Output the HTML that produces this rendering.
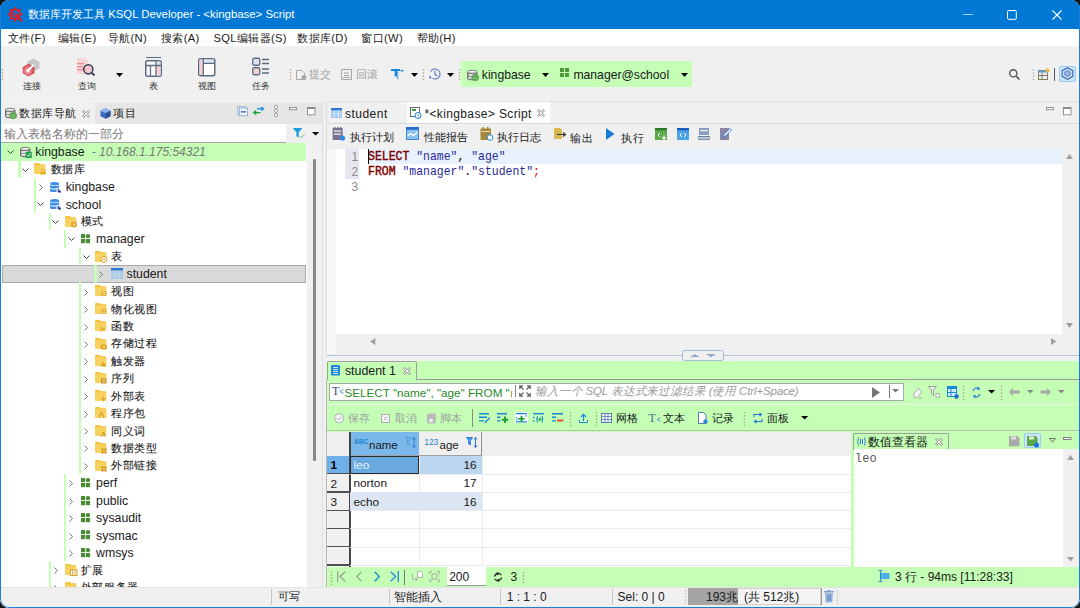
<!DOCTYPE html>
<html><head><meta charset="utf-8">
<style>
*{box-sizing:border-box;margin:0;padding:0}
html,body{width:1080px;height:608px;overflow:hidden;background:#161616}
body{font-family:"Liberation Sans",sans-serif;font-size:12px;color:#1a1a1a;position:relative}
.a{position:absolute}
.t{position:absolute;white-space:pre;line-height:1}
svg{position:absolute;overflow:visible}
#win{position:absolute;left:0;top:0;width:1080px;height:608px;border-radius:9px;overflow:hidden;background:#f0f0f0}
</style></head><body>
<div id="win">
<div class="a" style="left:0px;top:0px;width:1080px;height:28.7px;background:#0078d4;"></div>
<svg style="left:8px;top:7px;" width="16" height="16" viewBox="0 0 16 16"><polygon points="6.05,0.19 8.35,0.19 8.64,2.10 9.86,2.60 11.42,1.46 13.04,3.08 11.90,4.64 12.40,5.86 14.31,6.15 14.31,8.45 12.40,8.74 11.90,9.96 13.04,11.52 11.42,13.14 9.86,12.00 8.64,12.50 8.35,14.41 6.05,14.41 5.76,12.50 4.54,12.00 2.98,13.14 1.36,11.52 2.50,9.96 2.00,8.74 0.09,8.45 0.09,6.15 2.00,5.86 2.50,4.64 1.36,3.08 2.98,1.46 4.54,2.60 5.76,2.10" fill="#dc1e28"/><circle cx="7.2" cy="7.3" r="3.7" fill="#0078d4"/><path d="M8.4 8.5 L13.6 13.7" stroke="#dc1e28" stroke-width="2" stroke-linecap="round"/><path d="M5.9 4.9 A2.5 2.5 0 1 0 9.7 7.9" fill="none" stroke="#dc1e28" stroke-width="1.5"/><path d="M7.5 6.3 L10 8.8" stroke="#dc1e28" stroke-width="1.6"/></svg>
<div class="t" style="left:28px;top:9px;font-size:11.4px;color:#fff;">数据库开发工具 KSQL Developer - &lt;kingbase&gt; Script</div>
<div class="a" style="left:963px;top:13.6px;width:9.5px;height:1px;background:#a8d0f4;"></div>
<svg style="left:1007px;top:9.5px;" width="10" height="10" viewBox="0 0 10 10"><rect x="0.5" y="0.5" width="8.8" height="8.8" rx="1" fill="none" stroke="#fff" stroke-width="1"/></svg>
<svg style="left:1051.8px;top:9.6px;" width="10" height="10" viewBox="0 0 10 10"><path d="M0.5 0.5L9.5 9.5M9.5 0.5L0.5 9.5" stroke="#fff" stroke-width="1.1"/></svg>
<div class="a" style="left:0px;top:28.7px;width:1080px;height:17.5px;background:#fff;"></div>
<div class="t" style="left:7.8px;top:33px;font-size:11.2px;color:#1a1a1a;letter-spacing:0.35px">文件(F)</div>
<div class="t" style="left:57.8px;top:33px;font-size:11.2px;color:#1a1a1a;letter-spacing:0.35px">编辑(E)</div>
<div class="t" style="left:107.8px;top:33px;font-size:11.2px;color:#1a1a1a;letter-spacing:0.35px">导航(N)</div>
<div class="t" style="left:161px;top:33px;font-size:11.2px;color:#1a1a1a;letter-spacing:0.35px">搜索(A)</div>
<div class="t" style="left:213.5px;top:33px;font-size:11.2px;color:#1a1a1a;letter-spacing:0.35px">SQL编辑器(S)</div>
<div class="t" style="left:297.2px;top:33px;font-size:11.2px;color:#1a1a1a;letter-spacing:0.35px">数据库(D)</div>
<div class="t" style="left:361.3px;top:33px;font-size:11.2px;color:#1a1a1a;letter-spacing:0.35px">窗口(W)</div>
<div class="t" style="left:416.5px;top:33px;font-size:11.2px;color:#1a1a1a;letter-spacing:0.35px">帮助(H)</div>
<div class="a" style="left:0px;top:46px;width:1080px;height:55px;background:#f0f0f0;"></div>
<svg style="left:2px;top:69px;" width="1" height="12" viewBox="0 0 1 12"><rect x="-0.2" y="0.0" width="1.4" height="1.4" fill="#b9a98a"/><rect x="-0.2" y="3.2" width="1.4" height="1.4" fill="#b9a98a"/><rect x="-0.2" y="6.4" width="1.4" height="1.4" fill="#b9a98a"/><rect x="-0.2" y="9.6" width="1.4" height="1.4" fill="#b9a98a"/></svg>
<svg style="left:22px;top:58px;" width="19" height="19" viewBox="0 0 19 19"><defs><radialGradient id="rg" cx="0.45" cy="0.55" r="0.6"><stop offset="0" stop-color="#fff"/><stop offset="0.35" stop-color="#e88890"/><stop offset="1" stop-color="#d22a35"/></radialGradient></defs><path d="M11.5 0.5 L17.5 3.8 V10.2 L11.5 13.5 L5.5 10.2 V3.8Z" fill="#c6c6c6"/><path d="M6.5 5.8 L12.3 9 V15.3 L6.5 18.5 L0.7 15.3 V9Z" fill="url(#rg)"/><path d="M5.5 13 L11.3 7.2" stroke="#fff" stroke-width="2" stroke-linecap="round"/></svg>
<div class="t" style="left:22.5px;top:81px;font-size:9.4px;color:#333;">连接</div>
<svg style="left:77px;top:58px;" width="18" height="19" viewBox="0 0 18 19"><path d="M0 0H8L11 3V16H0Z" fill="#f8d7d9"/><rect x="0" y="5" width="7" height="1.3" fill="#ef8a92"/><rect x="0" y="8" width="6" height="1.3" fill="#ef8a92"/><rect x="0" y="11" width="7" height="1.3" fill="#ef8a92"/><circle cx="11.3" cy="11.3" r="4.6" fill="#f5c6cb" stroke="#2f3e55" stroke-width="1.5"/><path d="M14.6 14.6 L17.5 17.5" stroke="#2f3e55" stroke-width="1.8"/></svg>
<div class="t" style="left:77.5px;top:81px;font-size:9.4px;color:#333;">查询</div>
<svg style="left:116px;top:73px;" width="7" height="4" viewBox="0 0 7 4"><path d="M0 0H7L3.5 4Z" fill="#000"/></svg>
<svg style="left:145px;top:57px;" width="17" height="20" viewBox="0 0 17 20"><rect x="1" y="0" width="15" height="1" fill="#5b6b80"/><rect x="0.75" y="3.75" width="15.5" height="15.5" rx="2" fill="#fff" stroke="#5b6b80" stroke-width="1.5"/><rect x="11.5" y="9" width="4" height="9.5" fill="#f6cfd3"/><rect x="11.5" y="4.5" width="4" height="4" fill="#dde3ef"/><path d="M1 8.5H16M5.5 8.5V19M11 4V19" stroke="#5b6b80" stroke-width="1.3"/></svg>
<div class="t" style="left:149px;top:81.3px;font-size:9.4px;color:#333;">表</div>
<svg style="left:198px;top:58px;" width="18" height="19" viewBox="0 0 18 19"><rect x="0.75" y="0.75" width="16" height="17" rx="2" fill="#fff" stroke="#5b6b80" stroke-width="1.5"/><rect x="1.5" y="1.5" width="3.5" height="15.5" fill="#f6cfd3"/><rect x="6" y="1.5" width="10" height="3.5" fill="#dde3ef"/><path d="M5.3 1V18M5.3 5.3H17" stroke="#5b6b80" stroke-width="1.3"/></svg>
<div class="t" style="left:198px;top:81.3px;font-size:9.4px;color:#333;">视图</div>
<svg style="left:252px;top:57px;" width="18" height="20" viewBox="0 0 18 20"><rect x="0.75" y="1.25" width="7" height="7" rx="1.5" fill="#dde3ef" stroke="#5b6b80" stroke-width="1.3"/><rect x="0.75" y="10.75" width="7" height="7" rx="1.5" fill="#f6cfd3" stroke="#5b6b80" stroke-width="1.3"/><path d="M10 2.5H17M10 6.5H17M10 12H17M10 16H17" stroke="#5b6b80" stroke-width="1.3"/></svg>
<div class="t" style="left:252px;top:81.3px;font-size:9.4px;color:#333;">任务</div>
<svg style="left:289.5px;top:69px;" width="1" height="12" viewBox="0 0 1 12"><rect x="-0.2" y="0.0" width="1.4" height="1.4" fill="#b9a98a"/><rect x="-0.2" y="3.2" width="1.4" height="1.4" fill="#b9a98a"/><rect x="-0.2" y="6.4" width="1.4" height="1.4" fill="#b9a98a"/><rect x="-0.2" y="9.6" width="1.4" height="1.4" fill="#b9a98a"/></svg>
<svg style="left:296px;top:69px;" width="11" height="11" viewBox="0 0 11 11"><path d="M0.5 1.5H6L8.5 4V10.5H0.5Z" fill="none" stroke="#a8a8a8"/><circle cx="8" cy="8.5" r="2.5" fill="#a8a8a8"/></svg>
<div class="t" style="left:309px;top:68.5px;font-size:11px;color:#a0a0a0;">提交</div>
<svg style="left:341px;top:69px;" width="11" height="11" viewBox="0 0 11 11"><rect x="0.5" y="0.5" width="10" height="10" fill="none" stroke="#a8a8a8"/><path d="M3 4H8M3 6.5H8M2 8.5H9" stroke="#a8a8a8"/></svg>
<div class="t" style="left:356px;top:68.5px;font-size:11px;color:#a0a0a0;">回滚</div>
<svg style="left:390.8px;top:68.8px;" width="13" height="12" viewBox="0 0 13 12"><rect x="0" y="0" width="9.2" height="2" fill="#1a8ad8"/><rect x="3.6" y="1.5" width="2.4" height="6" fill="#1a8ad8"/><rect x="5.9" y="2.6" width="1.4" height="1.2" fill="#1a8ad8"/><rect x="5.9" y="4.6" width="1.4" height="1.2" fill="#1a8ad8"/><rect x="5.9" y="6.6" width="1.4" height="1.2" fill="#1a8ad8"/><rect x="5.9" y="8.6" width="1.4" height="1.4" fill="#1a8ad8"/><rect x="9.8" y="1" width="2.6" height="1.5" fill="#1a8ad8"/></svg>
<svg style="left:410.8px;top:73px;" width="7" height="4" viewBox="0 0 7 4"><path d="M0 0H7L3.5 4Z" fill="#000"/></svg>
<svg style="left:423.3px;top:69px;" width="1" height="12" viewBox="0 0 1 12"><rect x="-0.2" y="0.0" width="1.4" height="1.4" fill="#b9a98a"/><rect x="-0.2" y="3.2" width="1.4" height="1.4" fill="#b9a98a"/><rect x="-0.2" y="6.4" width="1.4" height="1.4" fill="#b9a98a"/><rect x="-0.2" y="9.6" width="1.4" height="1.4" fill="#b9a98a"/></svg>
<svg style="left:428.7px;top:68.2px;" width="12" height="12" viewBox="0 0 12 12"><path d="M1.67 3.5A5 5 0 1 1 3.5 10.33" fill="none" stroke="#6a7fc0" stroke-width="1.2"/><path d="M0.2 7.6L2.9 9.3L0.6 11.3Z" fill="#6a7fc0"/><path d="M6 2.8V6.6L8.3 7.6" stroke="#6a7fc0" stroke-width="1.2" fill="none"/></svg>
<svg style="left:446.7px;top:73px;" width="7" height="4" viewBox="0 0 7 4"><path d="M0 0H7L3.5 4Z" fill="#000"/></svg>
<svg style="left:458.5px;top:69px;" width="1" height="12" viewBox="0 0 1 12"><rect x="-0.2" y="0.0" width="1.4" height="1.4" fill="#b9a98a"/><rect x="-0.2" y="3.2" width="1.4" height="1.4" fill="#b9a98a"/><rect x="-0.2" y="6.4" width="1.4" height="1.4" fill="#b9a98a"/><rect x="-0.2" y="9.6" width="1.4" height="1.4" fill="#b9a98a"/></svg>
<div class="a" style="left:460.7px;top:61.4px;width:231.3px;height:25.6px;background:#c4ffb5;"></div>
<svg style="left:467px;top:69.5px;" width="12" height="11" viewBox="0 0 12 11"><path d="M0.5 1.8V8.6C0.5 10.2 10 10.2 10 8.6V1.8" fill="#8a8a8a" stroke="#666" stroke-width="0.8"/><ellipse cx="5.25" cy="1.8" rx="4.75" ry="1.5" fill="#f4f4f4" stroke="#666" stroke-width="0.8"/><rect x="1.6" y="4.2" width="6" height="1.6" fill="#f0f0f0"/><rect x="1.6" y="7" width="6" height="1.6" fill="#f0f0f0"/><ellipse cx="8.2" cy="7.6" rx="3.6" ry="3.3" fill="#5aaa50" stroke="#7a9a70" stroke-width="0.6"/><path d="M6.3 7H10.1M6.3 8.6H10.1" stroke="#8ad080" stroke-width="0.7"/></svg>
<div class="t" style="left:481.8px;top:68.7px;font-size:12.2px;color:#1a1a1a;">kingbase</div>
<svg style="left:542.3px;top:72.7px;" width="7" height="4" viewBox="0 0 7 4"><path d="M0 0H7L3.5 4Z" fill="#000"/></svg>
<svg style="left:560px;top:68px;" width="9" height="9" viewBox="0 0 9 9"><rect x="0" y="0" width="4" height="4" fill="#4f9a3a"/><rect x="5" y="0" width="4" height="4" fill="#4f9a3a"/><rect x="0" y="5" width="4" height="4" fill="#4f9a3a"/><rect x="5" y="5" width="4" height="4" fill="#4f9a3a"/></svg>
<div class="t" style="left:573.4px;top:68.7px;font-size:12.2px;color:#1a1a1a;">manager@school</div>
<svg style="left:681.4px;top:72.7px;" width="7" height="4" viewBox="0 0 7 4"><path d="M0 0H7L3.5 4Z" fill="#000"/></svg>
<svg style="left:1009px;top:69px;" width="11" height="11" viewBox="0 0 11 11"><circle cx="4.3" cy="4.3" r="3.6" fill="none" stroke="#555" stroke-width="1.4"/><path d="M7 7L10.5 10.5" stroke="#555" stroke-width="1.6"/></svg>
<svg style="left:1033px;top:69px;" width="1" height="12" viewBox="0 0 1 12"><rect x="-0.2" y="0.0" width="1.4" height="1.4" fill="#b0b0b0"/><rect x="-0.2" y="3.2" width="1.4" height="1.4" fill="#b0b0b0"/><rect x="-0.2" y="6.4" width="1.4" height="1.4" fill="#b0b0b0"/><rect x="-0.2" y="9.6" width="1.4" height="1.4" fill="#b0b0b0"/></svg>
<svg style="left:1038px;top:68px;" width="12" height="12" viewBox="0 0 12 12"><rect x="0.5" y="2.5" width="9" height="9" fill="#e6f2fb" stroke="#8a7a5a"/><rect x="0.5" y="2.5" width="9" height="2" fill="#5a9bd8"/><path d="M4 4.5V11.5M0.5 7.5H9.5" stroke="#8a7a5a"/><path d="M9.5 0L12 2.5L9.5 5L7 2.5Z" fill="#e8b838"/></svg>
<div class="a" style="left:1054.4px;top:67.5px;width:1px;height:13.5px;background:#555;"></div>
<div class="a" style="left:1059px;top:66px;width:17px;height:15.6px;background:#cce4f7;border:1px solid #99ccf5;border-radius:2px"></div>
<svg style="left:1061px;top:67px;" width="13" height="13" viewBox="0 0 13 13"><path d="M6.5 0.7L11.8 3.6V9.4L6.5 12.3L1.2 9.4V3.6Z" fill="none" stroke="#3f6cb5" stroke-width="1.2"/><path d="M6.5 3.5L9.2 5V8L6.5 9.5L3.8 8V5Z" fill="#9bb8e0" stroke="#3f6cb5" stroke-width="0.8"/></svg>
<div class="a" style="left:1px;top:101px;width:322px;height:486px;background:#fff;"></div>
<div class="a" style="left:1px;top:101px;width:322px;height:23px;background:#e6e6e6;"></div>
<div class="a" style="left:1px;top:101px;width:322px;height:1px;background:#f6f6f6;"></div>
<div class="a" style="left:1px;top:102px;width:94px;height:22px;background:#f0f0f0;"></div>
<svg style="left:5px;top:108.3px;" width="12" height="11" viewBox="0 0 12 11"><path d="M0.5 1.8V8.6C0.5 10.2 10 10.2 10 8.6V1.8" fill="#9a9a9a" stroke="#555" stroke-width="0.8"/><ellipse cx="5.25" cy="1.8" rx="4.75" ry="1.5" fill="#f4f4f4" stroke="#555" stroke-width="0.8"/><rect x="1.6" y="4.2" width="6.5" height="1.6" fill="#eee"/><rect x="1.6" y="7" width="6.5" height="1.6" fill="#eee"/><ellipse cx="8.2" cy="7.6" rx="3.6" ry="3.3" fill="#5aaa50" stroke="#7a9a70" stroke-width="0.6"/><path d="M6.3 7H10.1M6.3 8.6H10.1" stroke="#8ad080" stroke-width="0.7"/></svg>
<div class="t" style="left:19.3px;top:108px;font-size:11.4px;color:#1a1a1a;letter-spacing:0.45px">数据库导航</div>
<svg style="left:82px;top:110px;" width="8" height="8" viewBox="0 0 8 8"><path d="M0.5 1.7L1.7 0.5L4 2.8L6.3 0.5L7.5 1.7L5.2 4L7.5 6.3L6.3 7.5L4 5.2L1.7 7.5L0.5 6.3L2.8 4Z" fill="#fff" stroke="#7a7a7a" stroke-width="0.9"/></svg>
<svg style="left:100px;top:108px;" width="11" height="11" viewBox="0 0 11 11"><path d="M5.5 0.3L10.5 2.8V8.2L5.5 10.7L0.5 8.2V2.8Z" fill="#3a6cc0"/><path d="M0.5 2.8L5.5 5.3L10.5 2.8L5.5 0.3Z" fill="#8fb3ea"/><path d="M5.5 5.3V10.7L10.5 8.2V2.8Z" fill="#2a4f96"/></svg>
<div class="t" style="left:113.3px;top:108px;font-size:11.4px;color:#1a1a1a;letter-spacing:0.45px">项目</div>
<svg style="left:236.5px;top:106px;" width="11" height="10" viewBox="0 0 11 10"><rect x="0.5" y="0.5" width="8" height="7.5" fill="#dce8f6" stroke="#a8bcd8" stroke-width="0.9"/><rect x="2.3" y="2" width="8.2" height="7.7" fill="#eef4fb" stroke="#90a8cc" stroke-width="0.9"/><rect x="3.8" y="5.2" width="5.2" height="1.3" fill="#3a5a9a"/></svg>
<svg style="left:252.8px;top:107.2px;" width="11.5" height="7.5" viewBox="0 0 11.5 7.5"><path d="M4 1.8H10M8.2 0L10.6 1.8L8.2 3.6" stroke="#2a9ae0" stroke-width="1.4" fill="none"/><path d="M7.5 5.6H1.2M3.2 3.8L0.8 5.6L3.2 7.4" stroke="#1aa040" stroke-width="1.4" fill="none"/></svg>
<svg style="left:274px;top:105px;" width="5" height="12" viewBox="0 0 5 12"><circle cx="2.1" cy="1.8" r="1.6" fill="#fff" stroke="#888" stroke-width="0.8"/><circle cx="2.1" cy="5.9" r="1.6" fill="#fff" stroke="#888" stroke-width="0.8"/><circle cx="2.1" cy="10" r="1.6" fill="#fff" stroke="#888" stroke-width="0.8"/></svg>
<svg style="left:289.4px;top:107px;" width="8" height="3" viewBox="0 0 8 3"><rect x="0.5" y="0.5" width="7" height="2.2" fill="#fff" stroke="#888" stroke-width="0.9"/></svg>
<svg style="left:307px;top:107px;" width="8.5" height="8" viewBox="0 0 8.5 8"><rect x="0.5" y="0.5" width="7.5" height="7.3" fill="#fff" stroke="#888" stroke-width="0.9"/><rect x="0.5" y="0.5" width="7.5" height="1.5" fill="#888"/></svg>
<div class="a" style="left:1px;top:124px;width:285px;height:18px;background:#fff;"></div>
<div class="a" style="left:1px;top:141.7px;width:285px;height:1px;background:#a9a9a9;"></div>
<div class="a" style="left:286px;top:124px;width:37px;height:19px;background:#f0f0f0;"></div>
<div class="t" style="left:4.4px;top:128.6px;font-size:11.8px;color:#777;">输入表格名称的一部分</div>
<svg style="left:293.2px;top:127.6px;" width="13" height="10" viewBox="0 0 13 10"><path d="M0 0.3Q0 0 0.6 0H8.6Q9.2 0 9.2 0.6L5.8 4.2V9.8L3.4 8.2V4.2L0 0.6Z" fill="#1ea0e0"/><path d="M6.8 8.2L8.3 9.6L11.8 6.2" stroke="#5cc06a" stroke-width="0.9" fill="none"/></svg>
<svg style="left:311.6px;top:132px;" width="7.2" height="3.6" viewBox="0 0 7.2 3.6"><path d="M0 0H7.2L3.6 3.6Z" fill="#000"/></svg>
<div class="a" style="left:307px;top:143px;width:15.5px;height:444px;background:#f0f0f0;"></div>
<div class="a" style="left:313.2px;top:159.3px;width:2.4px;height:302px;background:#888;border-radius:1.2px"></div>
<div class="a" style="left:322.4px;top:101px;width:1px;height:486px;background:#e0e0e0;"></div>
<div class="a" style="left:323px;top:101px;width:3px;height:486px;background:#f0f0f0;"></div>
<div class="a" style="left:1px;top:143.0px;width:305.3px;height:18.020000000000003px;background:#c4ffb5;"></div>
<svg style="left:6.7px;top:150.2px;" width="7" height="4" viewBox="0 0 7 4"><path d="M0.5 0.5L3.5 3.5L6.5 0.5" fill="none" stroke="#444" stroke-width="1"/></svg>
<svg style="left:19.9px;top:147.0px;" width="12" height="11" viewBox="0 0 12 11"><path d="M0.5 1.8V8.6C0.5 10.2 10 10.2 10 8.6V1.8" fill="#9a9a9a" stroke="#555" stroke-width="0.8"/><ellipse cx="5.25" cy="1.8" rx="4.75" ry="1.5" fill="#f4f4f4" stroke="#555" stroke-width="0.8"/><rect x="1.6" y="4.2" width="6.5" height="1.6" fill="#eee"/><rect x="1.6" y="7" width="6.5" height="1.6" fill="#eee"/><rect x="5.6" y="4.8" width="6.2" height="6.2" rx="0.8" fill="#22a050"/><path d="M7 8L8.4 9.4L10.6 6.2" stroke="#e0f0e0" stroke-width="1" fill="none"/></svg>
<div class="t" style="left:35.3px;top:146.3px;font-size:12.3px;color:#1a1a1a;">kingbase</div>
<div class="t" style="left:91.7px;top:146.3px;font-size:12px;color:#777;font-style:italic">- 10.168.1.175:54321</div>
<div class="a" style="left:18.4px;top:160.42000000000002px;width:2.2px;height:17.62px;background:#c4ffb5;"></div>
<svg style="left:21.9px;top:167.62px;" width="7" height="4" viewBox="0 0 7 4"><path d="M0.5 0.5L3.5 3.5L6.5 0.5" fill="none" stroke="#444" stroke-width="1"/></svg>
<svg style="left:34.3px;top:163.42000000000002px;" width="12" height="11" viewBox="0 0 12 11"><path d="M0 1.2Q0 0 1 0H5L6.2 1.2H10.2Q11.2 1.2 11.2 2.2V9.7Q11.2 10.7 10.2 10.7H1Q0 10.7 0 9.7Z" fill="#f2c440"/><path d="M0 2.2H11.2V9.7Q11.2 10.7 10.2 10.7H1Q0 10.7 0 9.7Z" fill="#f7d25e"/><g transform="translate(-1,-0.5)"><rect x="7" y="7" width="6" height="5" rx="1" fill="#e8b020"/><path d="M7 8.5H13" stroke="#fff" stroke-width="0.6"/></g></svg>
<div class="t" style="left:50.5px;top:164.22000000000003px;font-size:11.4px;color:#1a1a1a;letter-spacing:0.55px;-webkit-text-stroke:0.1px #1a1a1a">数据库</div>
<div class="a" style="left:33.6px;top:177.84px;width:2.2px;height:17.62px;background:#c4ffb5;"></div>
<svg style="left:38.6px;top:184.14000000000001px;" width="4" height="7" viewBox="0 0 4 7"><path d="M0.5 0.5L3.5 3.5L0.5 6.5" fill="none" stroke="#777" stroke-width="1"/></svg>
<svg style="left:50.39999999999999px;top:181.64000000000001px;" width="12" height="11" viewBox="0 0 12 11"><ellipse cx="4.6" cy="1.7" rx="4.6" ry="1.7" fill="#3b8fe6"/><path d="M0 3V5.4C0 7 9.2 7 9.2 5.4V3C9.2 4.3 0 4.3 0 3Z" fill="#3b8fe6"/><path d="M0 6.6V8.9C0 10.5 9.2 10.5 9.2 8.9V6.6C9.2 7.9 0 7.9 0 6.6Z" fill="#3b8fe6"/><path d="M6.2 6.3L8 5.6L11.2 7.6V10.6L8.2 10.8L6.2 9.6Z" fill="#d8d8e8"/><path d="M7.5 6.8L10.8 9.6V10.6H8.4Z" fill="#1a2a8a"/></svg>
<div class="t" style="left:65.69999999999999px;top:181.14000000000001px;font-size:12.3px;color:#1a1a1a;">kingbase</div>
<div class="a" style="left:33.6px;top:195.26px;width:2.2px;height:17.62px;background:#c4ffb5;"></div>
<svg style="left:37.1px;top:202.45999999999998px;" width="7" height="4" viewBox="0 0 7 4"><path d="M0.5 0.5L3.5 3.5L6.5 0.5" fill="none" stroke="#444" stroke-width="1"/></svg>
<svg style="left:50.39999999999999px;top:199.06px;" width="12" height="11" viewBox="0 0 12 11"><ellipse cx="4.6" cy="1.7" rx="4.6" ry="1.7" fill="#3b8fe6"/><path d="M0 3V5.4C0 7 9.2 7 9.2 5.4V3C9.2 4.3 0 4.3 0 3Z" fill="#3b8fe6"/><path d="M0 6.6V8.9C0 10.5 9.2 10.5 9.2 8.9V6.6C9.2 7.9 0 7.9 0 6.6Z" fill="#3b8fe6"/><path d="M6.2 6.3L8 5.6L11.2 7.6V10.6L8.2 10.8L6.2 9.6Z" fill="#d8d8e8"/><path d="M7.5 6.8L10.8 9.6V10.6H8.4Z" fill="#1a2a8a"/></svg>
<div class="t" style="left:65.69999999999999px;top:198.56px;font-size:12.3px;color:#1a1a1a;">school</div>
<div class="a" style="left:48.8px;top:212.68px;width:2.2px;height:17.62px;background:#c4ffb5;"></div>
<svg style="left:52.3px;top:219.88px;" width="7" height="4" viewBox="0 0 7 4"><path d="M0.5 0.5L3.5 3.5L6.5 0.5" fill="none" stroke="#444" stroke-width="1"/></svg>
<svg style="left:64.7px;top:215.68px;" width="12" height="11" viewBox="0 0 12 11"><path d="M0 1.2Q0 0 1 0H5L6.2 1.2H10.2Q11.2 1.2 11.2 2.2V9.7Q11.2 10.7 10.2 10.7H1Q0 10.7 0 9.7Z" fill="#f2c440"/><path d="M0 2.2H11.2V9.7Q11.2 10.7 10.2 10.7H1Q0 10.7 0 9.7Z" fill="#f7d25e"/><g transform="translate(-1,-0.5)"><circle cx="10" cy="9" r="3" fill="#e8a020"/><circle cx="10" cy="9" r="1" fill="#fff"/></g></svg>
<div class="t" style="left:80.89999999999999px;top:216.48000000000002px;font-size:11.4px;color:#1a1a1a;letter-spacing:0.55px;-webkit-text-stroke:0.1px #1a1a1a">模式</div>
<div class="a" style="left:64.0px;top:230.10000000000002px;width:2.2px;height:17.62px;background:#c4ffb5;"></div>
<svg style="left:67.5px;top:237.3px;" width="7" height="4" viewBox="0 0 7 4"><path d="M0.5 0.5L3.5 3.5L6.5 0.5" fill="none" stroke="#444" stroke-width="1"/></svg>
<svg style="left:81.2px;top:234.3px;" width="10" height="10" viewBox="0 0 10 10"><rect x="0" y="0" width="4.2" height="4.2" fill="#4a8c32"/><circle cx="7" cy="2.1" r="2.2" fill="#4a8c32"/><rect x="0" y="5" width="4.2" height="4.2" fill="#4a8c32"/><rect x="4.9" y="5" width="4.2" height="4.2" fill="#4a8c32"/></svg>
<div class="t" style="left:96.1px;top:233.40000000000003px;font-size:12.3px;color:#1a1a1a;">manager</div>
<div class="a" style="left:79.2px;top:247.52px;width:2.2px;height:17.62px;background:#c4ffb5;"></div>
<svg style="left:82.7px;top:254.72px;" width="7" height="4" viewBox="0 0 7 4"><path d="M0.5 0.5L3.5 3.5L6.5 0.5" fill="none" stroke="#444" stroke-width="1"/></svg>
<svg style="left:95.10000000000001px;top:250.52px;" width="12" height="11" viewBox="0 0 12 11"><path d="M0 1.2Q0 0 1 0H5L6.2 1.2H10.2Q11.2 1.2 11.2 2.2V9.7Q11.2 10.7 10.2 10.7H1Q0 10.7 0 9.7Z" fill="#f2c440"/><path d="M0 2.2H11.2V9.7Q11.2 10.7 10.2 10.7H1Q0 10.7 0 9.7Z" fill="#f7d25e"/><g transform="translate(-1,-0.5)"><circle cx="10" cy="9" r="3" fill="#fff" stroke="#d89a20" stroke-width="1"/><circle cx="10" cy="9" r="1" fill="#d89a20"/></g></svg>
<div class="t" style="left:111.3px;top:251.32000000000002px;font-size:11.4px;color:#1a1a1a;letter-spacing:0.55px;-webkit-text-stroke:0.1px #1a1a1a">表</div>
<div class="a" style="left:1.5px;top:265.14px;width:304.5px;height:18.020000000000003px;background:#d9d9d9;border:1px solid #aaa"></div>
<div class="a" style="left:94.39999999999999px;top:264.94px;width:2.2px;height:17.62px;background:#c4ffb5;"></div>
<svg style="left:99.39999999999999px;top:271.24px;" width="4" height="7" viewBox="0 0 4 7"><path d="M0.5 0.5L3.5 3.5L0.5 6.5" fill="none" stroke="#777" stroke-width="1"/></svg>
<svg style="left:110.89999999999999px;top:268.44px;" width="12" height="11" viewBox="0 0 12 11"><rect x="0" y="0" width="12" height="2.5" fill="#2a7ad8"/><rect x="0" y="3.3" width="3.4" height="2.2" fill="#9cc8f2"/><rect x="4.3" y="3.3" width="3.4" height="2.2" fill="#9cc8f2"/><rect x="8.6" y="3.3" width="3.4" height="2.2" fill="#9cc8f2"/><rect x="0" y="6.3" width="3.4" height="2.2" fill="#9cc8f2"/><rect x="4.3" y="6.3" width="3.4" height="2.2" fill="#9cc8f2"/><rect x="8.6" y="6.3" width="3.4" height="2.2" fill="#9cc8f2"/><rect x="0" y="9.1" width="3.4" height="1.9" fill="#9cc8f2"/><rect x="4.3" y="9.1" width="3.4" height="1.9" fill="#9cc8f2"/><rect x="8.6" y="9.1" width="3.4" height="1.9" fill="#9cc8f2"/></svg>
<div class="t" style="left:126.49999999999999px;top:268.24px;font-size:12.3px;color:#1a1a1a;">student</div>
<div class="a" style="left:79.2px;top:282.36px;width:2.2px;height:17.62px;background:#c4ffb5;"></div>
<svg style="left:84.2px;top:288.66px;" width="4" height="7" viewBox="0 0 4 7"><path d="M0.5 0.5L3.5 3.5L0.5 6.5" fill="none" stroke="#777" stroke-width="1"/></svg>
<svg style="left:95.10000000000001px;top:285.36px;" width="12" height="11" viewBox="0 0 12 11"><path d="M0 1.2Q0 0 1 0H5L6.2 1.2H10.2Q11.2 1.2 11.2 2.2V9.7Q11.2 10.7 10.2 10.7H1Q0 10.7 0 9.7Z" fill="#f2c440"/><path d="M0 2.2H11.2V9.7Q11.2 10.7 10.2 10.7H1Q0 10.7 0 9.7Z" fill="#f7d25e"/><g transform="translate(-1,-0.5)"><rect x="7.5" y="6.5" width="5" height="5" fill="#e6a81e"/><path d="M8.5 8H11.5M8.5 10H11.5" stroke="#fff" stroke-width="0.7"/></g></svg>
<div class="t" style="left:111.3px;top:286.16px;font-size:11.4px;color:#1a1a1a;letter-spacing:0.55px;-webkit-text-stroke:0.1px #1a1a1a">视图</div>
<div class="a" style="left:79.2px;top:299.78000000000003px;width:2.2px;height:17.62px;background:#c4ffb5;"></div>
<svg style="left:84.2px;top:306.08000000000004px;" width="4" height="7" viewBox="0 0 4 7"><path d="M0.5 0.5L3.5 3.5L0.5 6.5" fill="none" stroke="#777" stroke-width="1"/></svg>
<svg style="left:95.10000000000001px;top:302.78000000000003px;" width="12" height="11" viewBox="0 0 12 11"><path d="M0 1.2Q0 0 1 0H5L6.2 1.2H10.2Q11.2 1.2 11.2 2.2V9.7Q11.2 10.7 10.2 10.7H1Q0 10.7 0 9.7Z" fill="#f2c440"/><path d="M0 2.2H11.2V9.7Q11.2 10.7 10.2 10.7H1Q0 10.7 0 9.7Z" fill="#f7d25e"/><g transform="translate(-1,-0.5)"><rect x="7.5" y="6.5" width="5" height="5" fill="#e6a81e"/><path d="M8.5 8H11.5M8.5 10H11.5" stroke="#fff" stroke-width="0.7"/></g></svg>
<div class="t" style="left:111.3px;top:303.58000000000004px;font-size:11.4px;color:#1a1a1a;letter-spacing:0.55px;-webkit-text-stroke:0.1px #1a1a1a">物化视图</div>
<div class="a" style="left:79.2px;top:317.20000000000005px;width:2.2px;height:17.62px;background:#c4ffb5;"></div>
<svg style="left:84.2px;top:323.50000000000006px;" width="4" height="7" viewBox="0 0 4 7"><path d="M0.5 0.5L3.5 3.5L0.5 6.5" fill="none" stroke="#777" stroke-width="1"/></svg>
<svg style="left:95.10000000000001px;top:320.20000000000005px;" width="12" height="11" viewBox="0 0 12 11"><path d="M0 1.2Q0 0 1 0H5L6.2 1.2H10.2Q11.2 1.2 11.2 2.2V9.7Q11.2 10.7 10.2 10.7H1Q0 10.7 0 9.7Z" fill="#f2c440"/><path d="M0 2.2H11.2V9.7Q11.2 10.7 10.2 10.7H1Q0 10.7 0 9.7Z" fill="#f7d25e"/><g transform="translate(-1,-0.5)"><text x="6.5" y="11.5" font-size="6" font-style="italic" fill="#c08a10" font-family="Liberation Serif">fx</text></g></svg>
<div class="t" style="left:111.3px;top:321.00000000000006px;font-size:11.4px;color:#1a1a1a;letter-spacing:0.55px;-webkit-text-stroke:0.1px #1a1a1a">函数</div>
<div class="a" style="left:79.2px;top:334.62px;width:2.2px;height:17.62px;background:#c4ffb5;"></div>
<svg style="left:84.2px;top:340.92px;" width="4" height="7" viewBox="0 0 4 7"><path d="M0.5 0.5L3.5 3.5L0.5 6.5" fill="none" stroke="#777" stroke-width="1"/></svg>
<svg style="left:95.10000000000001px;top:337.62px;" width="12" height="11" viewBox="0 0 12 11"><path d="M0 1.2Q0 0 1 0H5L6.2 1.2H10.2Q11.2 1.2 11.2 2.2V9.7Q11.2 10.7 10.2 10.7H1Q0 10.7 0 9.7Z" fill="#f2c440"/><path d="M0 2.2H11.2V9.7Q11.2 10.7 10.2 10.7H1Q0 10.7 0 9.7Z" fill="#f7d25e"/><g transform="translate(-1,-0.5)"><rect x="6.5" y="7" width="6.5" height="5" rx="2" fill="#e0a018"/><path d="M8 9.5H11.5" stroke="#fff" stroke-width="0.8"/></g></svg>
<div class="t" style="left:111.3px;top:338.42px;font-size:11.4px;color:#1a1a1a;letter-spacing:0.55px;-webkit-text-stroke:0.1px #1a1a1a">存储过程</div>
<div class="a" style="left:79.2px;top:352.04px;width:2.2px;height:17.62px;background:#c4ffb5;"></div>
<svg style="left:84.2px;top:358.34000000000003px;" width="4" height="7" viewBox="0 0 4 7"><path d="M0.5 0.5L3.5 3.5L0.5 6.5" fill="none" stroke="#777" stroke-width="1"/></svg>
<svg style="left:95.10000000000001px;top:355.04px;" width="12" height="11" viewBox="0 0 12 11"><path d="M0 1.2Q0 0 1 0H5L6.2 1.2H10.2Q11.2 1.2 11.2 2.2V9.7Q11.2 10.7 10.2 10.7H1Q0 10.7 0 9.7Z" fill="#f2c440"/><path d="M0 2.2H11.2V9.7Q11.2 10.7 10.2 10.7H1Q0 10.7 0 9.7Z" fill="#f7d25e"/><g transform="translate(-1,-0.5)"><path d="M6.5 12L9.5 7.5L12.5 12Z" fill="#e0a018"/></g></svg>
<div class="t" style="left:111.3px;top:355.84000000000003px;font-size:11.4px;color:#1a1a1a;letter-spacing:0.55px;-webkit-text-stroke:0.1px #1a1a1a">触发器</div>
<div class="a" style="left:79.2px;top:369.46000000000004px;width:2.2px;height:17.62px;background:#c4ffb5;"></div>
<svg style="left:84.2px;top:375.76000000000005px;" width="4" height="7" viewBox="0 0 4 7"><path d="M0.5 0.5L3.5 3.5L0.5 6.5" fill="none" stroke="#777" stroke-width="1"/></svg>
<svg style="left:95.10000000000001px;top:372.46000000000004px;" width="12" height="11" viewBox="0 0 12 11"><path d="M0 1.2Q0 0 1 0H5L6.2 1.2H10.2Q11.2 1.2 11.2 2.2V9.7Q11.2 10.7 10.2 10.7H1Q0 10.7 0 9.7Z" fill="#f2c440"/><path d="M0 2.2H11.2V9.7Q11.2 10.7 10.2 10.7H1Q0 10.7 0 9.7Z" fill="#f7d25e"/><g transform="translate(-1,-0.5)"><rect x="7" y="7" width="5.5" height="5" fill="#c88a10"/><path d="M8 8.5H11.5M8 10.5H11.5" stroke="#fff" stroke-width="0.7"/></g></svg>
<div class="t" style="left:111.3px;top:373.26000000000005px;font-size:11.4px;color:#1a1a1a;letter-spacing:0.55px;-webkit-text-stroke:0.1px #1a1a1a">序列</div>
<div class="a" style="left:79.2px;top:386.88px;width:2.2px;height:17.62px;background:#c4ffb5;"></div>
<svg style="left:84.2px;top:393.18px;" width="4" height="7" viewBox="0 0 4 7"><path d="M0.5 0.5L3.5 3.5L0.5 6.5" fill="none" stroke="#777" stroke-width="1"/></svg>
<svg style="left:95.10000000000001px;top:389.88px;" width="12" height="11" viewBox="0 0 12 11"><path d="M0 1.2Q0 0 1 0H5L6.2 1.2H10.2Q11.2 1.2 11.2 2.2V9.7Q11.2 10.7 10.2 10.7H1Q0 10.7 0 9.7Z" fill="#f2c440"/><path d="M0 2.2H11.2V9.7Q11.2 10.7 10.2 10.7H1Q0 10.7 0 9.7Z" fill="#f7d25e"/><g transform="translate(-1,-0.5)"><path d="M7 9.5H12M9.5 7V12" stroke="#e0a018" stroke-width="1"/></g></svg>
<div class="t" style="left:111.3px;top:390.68px;font-size:11.4px;color:#1a1a1a;letter-spacing:0.55px;-webkit-text-stroke:0.1px #1a1a1a">外部表</div>
<div class="a" style="left:79.2px;top:404.3px;width:2.2px;height:17.62px;background:#c4ffb5;"></div>
<svg style="left:84.2px;top:410.6px;" width="4" height="7" viewBox="0 0 4 7"><path d="M0.5 0.5L3.5 3.5L0.5 6.5" fill="none" stroke="#777" stroke-width="1"/></svg>
<svg style="left:95.10000000000001px;top:407.3px;" width="12" height="11" viewBox="0 0 12 11"><path d="M0 1.2Q0 0 1 0H5L6.2 1.2H10.2Q11.2 1.2 11.2 2.2V9.7Q11.2 10.7 10.2 10.7H1Q0 10.7 0 9.7Z" fill="#f2c440"/><path d="M0 2.2H11.2V9.7Q11.2 10.7 10.2 10.7H1Q0 10.7 0 9.7Z" fill="#f7d25e"/><g transform="translate(-1,-0.5)"><path d="M5 11L7.5 5.5L10 11" stroke="#c88a10" stroke-width="0.9" fill="none"/></g></svg>
<div class="t" style="left:111.3px;top:408.1px;font-size:11.4px;color:#1a1a1a;letter-spacing:0.55px;-webkit-text-stroke:0.1px #1a1a1a">程序包</div>
<div class="a" style="left:79.2px;top:421.72px;width:2.2px;height:17.62px;background:#c4ffb5;"></div>
<svg style="left:84.2px;top:428.02000000000004px;" width="4" height="7" viewBox="0 0 4 7"><path d="M0.5 0.5L3.5 3.5L0.5 6.5" fill="none" stroke="#777" stroke-width="1"/></svg>
<svg style="left:95.10000000000001px;top:424.72px;" width="12" height="11" viewBox="0 0 12 11"><path d="M0 1.2Q0 0 1 0H5L6.2 1.2H10.2Q11.2 1.2 11.2 2.2V9.7Q11.2 10.7 10.2 10.7H1Q0 10.7 0 9.7Z" fill="#f2c440"/><path d="M0 2.2H11.2V9.7Q11.2 10.7 10.2 10.7H1Q0 10.7 0 9.7Z" fill="#f7d25e"/><g transform="translate(-1,-0.5)"><text x="7" y="12" font-size="7" fill="#b88a10" font-family="Liberation Sans">A</text></g></svg>
<div class="t" style="left:111.3px;top:425.52000000000004px;font-size:11.4px;color:#1a1a1a;letter-spacing:0.55px;-webkit-text-stroke:0.1px #1a1a1a">同义词</div>
<div class="a" style="left:79.2px;top:439.14000000000004px;width:2.2px;height:17.62px;background:#c4ffb5;"></div>
<svg style="left:84.2px;top:445.44000000000005px;" width="4" height="7" viewBox="0 0 4 7"><path d="M0.5 0.5L3.5 3.5L0.5 6.5" fill="none" stroke="#777" stroke-width="1"/></svg>
<svg style="left:95.10000000000001px;top:442.14000000000004px;" width="12" height="11" viewBox="0 0 12 11"><path d="M0 1.2Q0 0 1 0H5L6.2 1.2H10.2Q11.2 1.2 11.2 2.2V9.7Q11.2 10.7 10.2 10.7H1Q0 10.7 0 9.7Z" fill="#f2c440"/><path d="M0 2.2H11.2V9.7Q11.2 10.7 10.2 10.7H1Q0 10.7 0 9.7Z" fill="#f7d25e"/><g transform="translate(-1,-0.5)"><rect x="7.5" y="7" width="2" height="2" fill="#c88a10"/><rect x="10.5" y="7" width="2" height="2" fill="#c88a10"/><rect x="7.5" y="10" width="2" height="2" fill="#c88a10"/><rect x="10.5" y="10" width="2" height="2" fill="#c88a10"/></g></svg>
<div class="t" style="left:111.3px;top:442.94000000000005px;font-size:11.4px;color:#1a1a1a;letter-spacing:0.55px;-webkit-text-stroke:0.1px #1a1a1a">数据类型</div>
<div class="a" style="left:79.2px;top:456.56000000000006px;width:2.2px;height:17.62px;background:#c4ffb5;"></div>
<svg style="left:84.2px;top:462.86000000000007px;" width="4" height="7" viewBox="0 0 4 7"><path d="M0.5 0.5L3.5 3.5L0.5 6.5" fill="none" stroke="#777" stroke-width="1"/></svg>
<svg style="left:95.10000000000001px;top:459.56000000000006px;" width="12" height="11" viewBox="0 0 12 11"><path d="M0 1.2Q0 0 1 0H5L6.2 1.2H10.2Q11.2 1.2 11.2 2.2V9.7Q11.2 10.7 10.2 10.7H1Q0 10.7 0 9.7Z" fill="#f2c440"/><path d="M0 2.2H11.2V9.7Q11.2 10.7 10.2 10.7H1Q0 10.7 0 9.7Z" fill="#f7d25e"/><g transform="translate(-1,-0.5)"><rect x="7.5" y="7" width="2" height="2" fill="#c88a10"/><rect x="10.5" y="7" width="2" height="2" fill="#c88a10"/><rect x="7.5" y="10" width="2" height="2" fill="#c88a10"/><rect x="10.5" y="10" width="2" height="2" fill="#c88a10"/></g></svg>
<div class="t" style="left:111.3px;top:460.36000000000007px;font-size:11.4px;color:#1a1a1a;letter-spacing:0.55px;-webkit-text-stroke:0.1px #1a1a1a">外部链接</div>
<div class="a" style="left:64.0px;top:473.98px;width:2.2px;height:17.62px;background:#c4ffb5;"></div>
<svg style="left:69.0px;top:480.28000000000003px;" width="4" height="7" viewBox="0 0 4 7"><path d="M0.5 0.5L3.5 3.5L0.5 6.5" fill="none" stroke="#777" stroke-width="1"/></svg>
<svg style="left:81.2px;top:478.18px;" width="10" height="10" viewBox="0 0 10 10"><rect x="0" y="0" width="4.2" height="4.2" fill="#4a8c32"/><circle cx="7" cy="2.1" r="2.2" fill="#4a8c32"/><rect x="0" y="5" width="4.2" height="4.2" fill="#4a8c32"/><rect x="4.9" y="5" width="4.2" height="4.2" fill="#4a8c32"/></svg>
<div class="t" style="left:96.1px;top:477.28000000000003px;font-size:12.3px;color:#1a1a1a;">perf</div>
<div class="a" style="left:64.0px;top:491.40000000000003px;width:2.2px;height:17.62px;background:#c4ffb5;"></div>
<svg style="left:69.0px;top:497.70000000000005px;" width="4" height="7" viewBox="0 0 4 7"><path d="M0.5 0.5L3.5 3.5L0.5 6.5" fill="none" stroke="#777" stroke-width="1"/></svg>
<svg style="left:81.2px;top:495.6px;" width="10" height="10" viewBox="0 0 10 10"><rect x="0" y="0" width="4.2" height="4.2" fill="#4a8c32"/><circle cx="7" cy="2.1" r="2.2" fill="#4a8c32"/><rect x="0" y="5" width="4.2" height="4.2" fill="#4a8c32"/><rect x="4.9" y="5" width="4.2" height="4.2" fill="#4a8c32"/></svg>
<div class="t" style="left:96.1px;top:494.70000000000005px;font-size:12.3px;color:#1a1a1a;">public</div>
<div class="a" style="left:64.0px;top:508.82000000000005px;width:2.2px;height:17.62px;background:#c4ffb5;"></div>
<svg style="left:69.0px;top:515.12px;" width="4" height="7" viewBox="0 0 4 7"><path d="M0.5 0.5L3.5 3.5L0.5 6.5" fill="none" stroke="#777" stroke-width="1"/></svg>
<svg style="left:81.2px;top:513.0200000000001px;" width="10" height="10" viewBox="0 0 10 10"><rect x="0" y="0" width="4.2" height="4.2" fill="#4a8c32"/><circle cx="7" cy="2.1" r="2.2" fill="#4a8c32"/><rect x="0" y="5" width="4.2" height="4.2" fill="#4a8c32"/><rect x="4.9" y="5" width="4.2" height="4.2" fill="#4a8c32"/></svg>
<div class="t" style="left:96.1px;top:512.12px;font-size:12.3px;color:#1a1a1a;">sysaudit</div>
<div class="a" style="left:64.0px;top:526.24px;width:2.2px;height:17.62px;background:#c4ffb5;"></div>
<svg style="left:69.0px;top:532.54px;" width="4" height="7" viewBox="0 0 4 7"><path d="M0.5 0.5L3.5 3.5L0.5 6.5" fill="none" stroke="#777" stroke-width="1"/></svg>
<svg style="left:81.2px;top:530.44px;" width="10" height="10" viewBox="0 0 10 10"><rect x="0" y="0" width="4.2" height="4.2" fill="#4a8c32"/><circle cx="7" cy="2.1" r="2.2" fill="#4a8c32"/><rect x="0" y="5" width="4.2" height="4.2" fill="#4a8c32"/><rect x="4.9" y="5" width="4.2" height="4.2" fill="#4a8c32"/></svg>
<div class="t" style="left:96.1px;top:529.54px;font-size:12.3px;color:#1a1a1a;">sysmac</div>
<div class="a" style="left:64.0px;top:543.6600000000001px;width:2.2px;height:17.62px;background:#c4ffb5;"></div>
<svg style="left:69.0px;top:549.96px;" width="4" height="7" viewBox="0 0 4 7"><path d="M0.5 0.5L3.5 3.5L0.5 6.5" fill="none" stroke="#777" stroke-width="1"/></svg>
<svg style="left:81.2px;top:547.8600000000001px;" width="10" height="10" viewBox="0 0 10 10"><rect x="0" y="0" width="4.2" height="4.2" fill="#4a8c32"/><circle cx="7" cy="2.1" r="2.2" fill="#4a8c32"/><rect x="0" y="5" width="4.2" height="4.2" fill="#4a8c32"/><rect x="4.9" y="5" width="4.2" height="4.2" fill="#4a8c32"/></svg>
<div class="t" style="left:96.1px;top:546.96px;font-size:12.3px;color:#1a1a1a;">wmsys</div>
<div class="a" style="left:48.8px;top:561.08px;width:2.2px;height:17.62px;background:#c4ffb5;"></div>
<svg style="left:53.8px;top:567.38px;" width="4" height="7" viewBox="0 0 4 7"><path d="M0.5 0.5L3.5 3.5L0.5 6.5" fill="none" stroke="#777" stroke-width="1"/></svg>
<svg style="left:64.7px;top:564.08px;" width="12" height="11" viewBox="0 0 12 11"><path d="M0 1.2Q0 0 1 0H5L6.2 1.2H10.2Q11.2 1.2 11.2 2.2V9.7Q11.2 10.7 10.2 10.7H1Q0 10.7 0 9.7Z" fill="#f2c440"/><path d="M0 2.2H11.2V9.7Q11.2 10.7 10.2 10.7H1Q0 10.7 0 9.7Z" fill="#f7d25e"/><g transform="translate(-1,-0.5)"><rect x="6.5" y="6.5" width="6.5" height="5.5" fill="#fff" stroke="#d89a20" stroke-width="0.9"/><path d="M8.5 7V12M11 7V12" stroke="#d89a20" stroke-width="0.8"/></g></svg>
<div class="t" style="left:80.89999999999999px;top:564.88px;font-size:11.4px;color:#1a1a1a;letter-spacing:0.55px;-webkit-text-stroke:0.1px #1a1a1a">扩展</div>
<div class="a" style="left:48.8px;top:578.5px;width:2.2px;height:17.62px;background:#c4ffb5;"></div>
<svg style="left:53.8px;top:584.8px;" width="4" height="7" viewBox="0 0 4 7"><path d="M0.5 0.5L3.5 3.5L0.5 6.5" fill="none" stroke="#777" stroke-width="1"/></svg>
<svg style="left:64.7px;top:581.5px;" width="12" height="11" viewBox="0 0 12 11"><path d="M0 1.2Q0 0 1 0H5L6.2 1.2H10.2Q11.2 1.2 11.2 2.2V9.7Q11.2 10.7 10.2 10.7H1Q0 10.7 0 9.7Z" fill="#f2c440"/><path d="M0 2.2H11.2V9.7Q11.2 10.7 10.2 10.7H1Q0 10.7 0 9.7Z" fill="#f7d25e"/><g transform="translate(-1,-0.5)"><rect x="6.5" y="6.5" width="6.5" height="5.5" fill="#fff" stroke="#d89a20" stroke-width="0.9"/><path d="M8.5 7V12M11 7V12" stroke="#d89a20" stroke-width="0.8"/></g></svg>
<div class="t" style="left:80.89999999999999px;top:582.3px;font-size:11.4px;color:#1a1a1a;letter-spacing:0.55px;-webkit-text-stroke:0.1px #1a1a1a">外部服务器</div>
<div class="a" style="left:326px;top:101px;width:753px;height:486px;background:#f0f0f0;"></div>
<div class="a" style="left:326px;top:101px;width:1px;height:253px;background:#dcdcdc;"></div>
<div class="a" style="left:326px;top:101px;width:753px;height:1px;background:#e2e2e2;"></div>
<div class="a" style="left:326px;top:122.8px;width:753px;height:1px;background:#dadada;"></div>
<div class="a" style="left:406.7px;top:102px;width:143.3px;height:20.8px;background:#fff;"></div>
<svg style="left:331px;top:108px;" width="11" height="10" viewBox="0 0 11 10"><rect x="0" y="0" width="11" height="2.5" fill="#2a7ad8"/><rect x="0" y="3.2" width="3.2" height="2" fill="#9cc8f2"/><rect x="0" y="5.7" width="3.2" height="2" fill="#9cc8f2"/><rect x="0" y="8" width="3.2" height="2" fill="#9cc8f2"/><rect x="3.9" y="3.2" width="3.2" height="2" fill="#9cc8f2"/><rect x="3.9" y="5.7" width="3.2" height="2" fill="#9cc8f2"/><rect x="3.9" y="8" width="3.2" height="2" fill="#9cc8f2"/><rect x="7.8" y="3.2" width="3.2" height="2" fill="#9cc8f2"/><rect x="7.8" y="5.7" width="3.2" height="2" fill="#9cc8f2"/><rect x="7.8" y="8" width="3.2" height="2" fill="#9cc8f2"/></svg>
<div class="t" style="left:344.9px;top:107.6px;font-size:12px;color:#1a1a1a;letter-spacing:0.5px">student</div>
<svg style="left:410px;top:107px;" width="12" height="12" viewBox="0 0 12 12"><rect x="0.5" y="0.5" width="9" height="9" fill="#fff" stroke="#667"/><rect x="2" y="2" width="4" height="2" fill="#3a9a3a"/><circle cx="8" cy="8.5" r="3" fill="#fff" stroke="#1a7ad8"/><path d="M8 7V8.6L9 9.3" stroke="#1a7ad8" stroke-width="0.8" fill="none"/></svg>
<div class="t" style="left:424.4px;top:107.6px;font-size:12px;color:#1a1a1a;letter-spacing:0.37px">*&lt;kingbase&gt; Script</div>
<svg style="left:537px;top:109px;" width="8" height="8" viewBox="0 0 8 8"><path d="M0.5 1.7L1.7 0.5L4 2.8L6.3 0.5L7.5 1.7L5.2 4L7.5 6.3L6.3 7.5L4 5.2L1.7 7.5L0.5 6.3L2.8 4Z" fill="#fff" stroke="#7a7a7a" stroke-width="0.9"/></svg>
<svg style="left:1046px;top:107.1px;" width="8" height="3" viewBox="0 0 8 3"><rect x="0.5" y="0.5" width="7" height="2.2" fill="#fff" stroke="#888" stroke-width="0.9"/></svg>
<svg style="left:1063px;top:107px;" width="8.5" height="8" viewBox="0 0 8.5 8"><rect x="0.5" y="0.5" width="7.5" height="7.3" fill="#fff" stroke="#888" stroke-width="0.9"/><rect x="0.5" y="0.5" width="7.5" height="1.5" fill="#888"/></svg>
<svg style="left:332px;top:127px;" width="13" height="14" viewBox="0 0 13 14"><rect x="0.6" y="1" width="10" height="12" fill="#7a7090"/><rect x="2" y="0" width="1.5" height="2" fill="#7a7090"/><rect x="5" y="0" width="1.5" height="2" fill="#7a7090"/><rect x="8" y="0" width="1.5" height="2" fill="#7a7090"/><rect x="2" y="3.5" width="7" height="1.2" fill="#fff"/><rect x="2" y="6.5" width="7" height="1.2" fill="#fff"/><circle cx="10.5" cy="11" r="2.6" fill="#2a8ae8"/></svg>
<div class="t" style="left:350px;top:132px;font-size:11.2px;color:#1a1a1a;">执行计划</div>
<svg style="left:405.5px;top:127px;" width="14" height="13" viewBox="0 0 14 13"><rect x="0" y="0" width="13" height="2.5" fill="#2a6cc8"/><rect x="0.5" y="2.5" width="12" height="10" fill="#8cc4f0" stroke="#2a6cc8" stroke-width="0.8"/><path d="M1.5 9L4.5 6.5L7.5 8.5L11.5 5" stroke="#fff" stroke-width="1.2" fill="none"/></svg>
<div class="t" style="left:424.2px;top:132px;font-size:11.2px;color:#1a1a1a;">性能报告</div>
<svg style="left:480px;top:127px;" width="13" height="14" viewBox="0 0 13 14"><rect x="0.5" y="1.5" width="10.5" height="11.5" fill="#a8893a"/><rect x="2.5" y="0" width="1.5" height="2.5" fill="#a8893a"/><rect x="7" y="0" width="1.5" height="2.5" fill="#a8893a"/><rect x="1.5" y="4" width="8.5" height="1" fill="#e8d8a8"/><circle cx="10" cy="10.5" r="2.8" fill="#fff" stroke="#1a8ad8" stroke-width="1"/></svg>
<div class="t" style="left:496.7px;top:132px;font-size:11.2px;color:#1a1a1a;">执行日志</div>
<svg style="left:554px;top:128px;" width="13" height="12" viewBox="0 0 13 12"><path d="M0 0H6L8 2V11H0Z" fill="#d8b850"/><path d="M3 6.5H11M9 4.5L11.5 6.5L9 8.5" stroke="#333" stroke-width="1.1" fill="none"/></svg>
<div class="t" style="left:570px;top:132.6px;font-size:11.4px;color:#1a1a1a;letter-spacing:0.6px">输出</div>
<svg style="left:606px;top:128px;" width="9" height="12" viewBox="0 0 9 12"><path d="M0 0L8.5 6L0 12Z" fill="#1a7ad8"/></svg>
<div class="t" style="left:621px;top:132.6px;font-size:11.4px;color:#1a1a1a;letter-spacing:0.6px">执行</div>
<svg style="left:655px;top:128px;" width="13" height="12" viewBox="0 0 13 12"><rect x="0" y="0" width="12" height="12" fill="#5aaa4a"/><rect x="0" y="0" width="12" height="2.3" fill="#2a7a2a"/><path d="M5 5L3 7L5 9" stroke="#fff" stroke-width="1" fill="none"/><path d="M9 7.5V12M6.8 9.8H11.2" stroke="#fff" stroke-width="1.2"/></svg>
<svg style="left:676.5px;top:128px;" width="13" height="12" viewBox="0 0 13 12"><rect x="0" y="0" width="12" height="12" fill="#4aa2e8"/><rect x="0" y="0" width="12" height="2.3" fill="#1a5ab8"/><path d="M4.8 5L3 7L4.8 9M7.2 5L9 7L7.2 9" stroke="#fff" stroke-width="1" fill="none"/></svg>
<svg style="left:698px;top:128px;" width="13" height="12" viewBox="0 0 13 12"><rect x="1" y="0" width="10" height="7" fill="#8aa0c0"/><rect x="2.5" y="2" width="7" height="1.2" fill="#fff"/><rect x="0" y="8" width="12" height="1.3" fill="#6a7fa0"/><rect x="0" y="10.5" width="12" height="1.3" fill="#6a7fa0"/></svg>
<svg style="left:720px;top:128px;" width="12" height="12" viewBox="0 0 12 12"><path d="M0 0H9V12H0Z" fill="#8a84a8"/><path d="M3 9L4 6.5L10 0.5L11.5 2L5.5 8Z" fill="#fff" stroke="#2a7ad8" stroke-width="0.9"/></svg>
<div class="a" style="left:327px;top:148.5px;width:735px;height:185.5px;background:#fff;"></div>
<div class="a" style="left:327px;top:148.5px;width:9px;height:185.5px;background:#f7f7f7;"></div>
<div class="a" style="left:345px;top:148.9px;width:14px;height:30px;background:#e6e6ee;"></div>
<div class="a" style="left:367.5px;top:148.5px;width:694.5px;height:15.2px;background:#e8f2fe;"></div>
<div class="t" style="left:351.5px;top:151px;font-size:12px;color:#8a8a8a;">1</div>
<div class="t" style="left:351.5px;top:166px;font-size:12px;color:#8a8a8a;">2</div>
<div class="t" style="left:351.5px;top:181px;font-size:12px;color:#8a8a8a;">3</div>
<div class="a" style="left:367.6px;top:148.8px;width:1.6px;height:14.8px;background:#000;"></div>
<div class="t" style="left:368px;top:150.5px;font-size:12.6px;color:#000;font-family:'Liberation Mono',monospace;transform:scaleX(0.91);transform-origin:0 0"><span style="color:#7f0000;-webkit-text-stroke:0.45px #7f0000">SELECT</span> <span style="color:#2a2a9a">"name"</span>, <span style="color:#2a2a9a">"age"</span></div>
<div class="t" style="left:368px;top:165.5px;font-size:12.6px;color:#000;font-family:'Liberation Mono',monospace;transform:scaleX(0.91);transform-origin:0 0"><span style="color:#7f0000;-webkit-text-stroke:0.45px #7f0000">FROM</span> <span style="color:#2a2a9a">"manager"</span>.<span style="color:#2a2a9a">"student"</span><span style="color:#e00">;</span></div>
<svg style="left:1066px;top:154px;" width="7" height="5" viewBox="0 0 7 5"><path d="M0 5H7L3.5 0Z" fill="#a0a0a0"/></svg>
<svg style="left:1066px;top:323px;" width="7" height="5" viewBox="0 0 7 5"><path d="M0 0H7L3.5 5Z" fill="#a0a0a0"/></svg>
<svg style="left:1051.2px;top:338px;" width="5.4" height="7" viewBox="0 0 5.4 7"><path d="M0 0V7L5.4 3.5Z" fill="#a0a0a0"/></svg>
<svg style="left:370px;top:338px;" width="5.4" height="7" viewBox="0 0 5.4 7"><path d="M5.4 0V7L0 3.5Z" fill="#a0a0a0"/></svg>
<div class="a" style="left:327px;top:334px;width:9px;height:20px;background:#f7f7f7;"></div>
<div class="a" style="left:326px;top:355px;width:753px;height:1px;background:#b8c8dc;"></div>
<div class="a" style="left:682px;top:349.5px;width:41.5px;height:11px;background:#f0f0f0;border:1px solid #a8bcd8;border-radius:2.5px"></div>
<svg style="left:689.8px;top:354px;" width="9.5" height="3" viewBox="0 0 9.5 3"><path d="M0 3H9.5L4.75 0Z" fill="#90a8cc"/></svg>
<svg style="left:705.5px;top:354px;" width="10" height="3.3" viewBox="0 0 10 3.3"><path d="M0 0H10L5 3.3Z" fill="#90a8cc"/></svg>
<div class="a" style="left:326px;top:361px;width:753px;height:226px;background:#c4ffb5;border-radius:3px 3px 0 0"></div>
<div class="a" style="left:326px;top:379.2px;width:753px;height:1px;background:#9a9a9a;"></div>
<div class="a" style="left:326.7px;top:361.2px;width:90px;height:18.8px;background:#c4ffb5;border:1px solid #a0a0a0;border-bottom:none;border-radius:2px 2px 0 0"></div>
<svg style="left:331px;top:365px;" width="10" height="11" viewBox="0 0 10 11"><rect x="0" y="0" width="9" height="10.5" rx="1" fill="#1a88d8"/><path d="M2 2.5H7M2 4.5H7M2 6.5H7M2 8.5H7" stroke="#fff" stroke-width="0.8"/></svg>
<div class="t" style="left:344.9px;top:364.6px;font-size:12.4px;color:#1a1a1a;">student 1</div>
<svg style="left:403px;top:367px;" width="8" height="8" viewBox="0 0 8 8"><path d="M0.5 1.7L1.7 0.5L4 2.8L6.3 0.5L7.5 1.7L5.2 4L7.5 6.3L6.3 7.5L4 5.2L1.7 7.5L0.5 6.3L2.8 4Z" fill="#fff" stroke="#7a7a7a" stroke-width="0.9"/></svg>
<div class="a" style="left:329.3px;top:382.8px;width:575px;height:18px;background:#fff;border:1px solid #a8a8a8"></div>
<div class="t" style="left:332px;top:384.5px;font-size:12px;color:#3a4a8a;font-family:'Liberation Serif',serif">T</div>
<svg style="left:338.5px;top:389px;" width="5" height="5" viewBox="0 0 5 5"><path d="M4.5 0.5L1 2.5L4.5 4.5" stroke="#3a8ad8" stroke-width="0.9" fill="none"/></svg>
<div class="t" style="left:344.4px;top:387.2px;font-size:11.7px;color:#2a8a2a;">SELECT "name", "age" FROM "</div>
<div class="a" style="left:511px;top:391px;width:1px;height:6px;background:#c0a020;"></div>
<div class="a" style="left:515px;top:385.2px;width:1px;height:12px;background:#888;"></div>
<svg style="left:519px;top:385.2px;" width="12" height="12" viewBox="0 0 12 12"><path d="M0.8 4V0.8H4M0.8 0.8L4.5 4.5M11.2 4V0.8H8M11.2 0.8L7.5 4.5M0.8 8V11.2H4M0.8 11.2L4.5 7.5M11.2 8V11.2H8M11.2 11.2L7.5 7.5" stroke="#666" stroke-width="1.3" fill="none"/></svg>
<div class="t" style="left:535px;top:385.6px;font-size:11.5px;color:#999;font-style:italic;letter-spacing:-0.15px">输入一个 SQL 表达式来过滤结果 (使用 Ctrl+Space)</div>
<svg style="left:872px;top:387.2px;" width="8" height="11" viewBox="0 0 8 11"><path d="M0 0L8 5.5L0 11Z" fill="#777"/></svg>
<div class="a" style="left:888.5px;top:385px;width:0.9px;height:13px;background:#777;"></div>
<svg style="left:892.2px;top:389.2px;" width="7" height="3.5" viewBox="0 0 7 3.5"><path d="M0 0H7L3.5 3.5Z" fill="#777"/></svg>
<svg style="left:912px;top:386px;" width="11" height="13" viewBox="0 0 11 13"><path d="M1.5 8L6.5 2.5L10 6L5 11.5H2.5Z" fill="#f4f4f4" stroke="#aaa" stroke-width="1"/><rect x="6" y="11.5" width="4" height="1" fill="#aaa"/></svg>
<svg style="left:928px;top:386px;" width="12" height="12" viewBox="0 0 12 12"><path d="M0.5 0.5H8.5L5.5 4V9.5L3.5 8V4Z" fill="#eee" stroke="#999" stroke-width="0.9"/><rect x="8" y="7.5" width="3.5" height="3.5" fill="#fff" stroke="#999" stroke-width="0.8"/></svg>
<svg style="left:946.6px;top:386px;" width="12" height="13" viewBox="0 0 12 13"><rect x="0.5" y="0.5" width="9" height="10" fill="#d4ecfa" stroke="#1a88d8"/><rect x="0.5" y="0.5" width="9" height="2.5" fill="#1a88d8"/><path d="M4 3V10.5M0.5 6.5H9.5" stroke="#1a88d8"/><circle cx="9.5" cy="10.5" r="2.3" fill="#1a6ac8"/></svg>
<svg style="left:962.9px;top:386px;" width="1" height="13" viewBox="0 0 1 13"><rect x="-0.2" y="0.0" width="1.4" height="1.4" fill="#b4a08c"/><rect x="-0.2" y="3.2" width="1.4" height="1.4" fill="#b4a08c"/><rect x="-0.2" y="6.4" width="1.4" height="1.4" fill="#b4a08c"/><rect x="-0.2" y="9.6" width="1.4" height="1.4" fill="#b4a08c"/><rect x="-0.2" y="12.8" width="1.4" height="1.4" fill="#b4a08c"/></svg>
<svg style="left:972px;top:386px;" width="9" height="13" viewBox="0 0 9 13"><path d="M1 5A4 4 0 0 1 7.5 3M8 8A4 4 0 0 1 1.5 10" stroke="#3a8ad8" stroke-width="1.3" fill="none"/><path d="M6 0.5L8.5 3.5L5 4Z" fill="#3a8ad8"/><path d="M3 12.5L0.5 9.5L4 9Z" fill="#3a8ad8"/></svg>
<svg style="left:988.3px;top:390px;" width="7.2" height="3.6" viewBox="0 0 7.2 3.6"><path d="M0 0H7.2L3.6 3.6Z" fill="#000"/></svg>
<svg style="left:1000.6px;top:386px;" width="1" height="13" viewBox="0 0 1 13"><rect x="-0.2" y="0.0" width="1.4" height="1.4" fill="#b4a08c"/><rect x="-0.2" y="3.2" width="1.4" height="1.4" fill="#b4a08c"/><rect x="-0.2" y="6.4" width="1.4" height="1.4" fill="#b4a08c"/><rect x="-0.2" y="9.6" width="1.4" height="1.4" fill="#b4a08c"/><rect x="-0.2" y="12.8" width="1.4" height="1.4" fill="#b4a08c"/></svg>
<svg style="left:1008.7px;top:388px;" width="11" height="8" viewBox="0 0 11 8"><path d="M4 0L0 4L4 8V5.5H10.6V2.5H4Z" fill="#a8a8a8"/></svg>
<svg style="left:1026.6px;top:390px;" width="6.6" height="3.4" viewBox="0 0 6.6 3.4"><path d="M0 0H6.6L3.3 3.4Z" fill="#888"/></svg>
<svg style="left:1040.3px;top:388px;" width="11" height="8" viewBox="0 0 11 8"><path d="M7 0L11 4L7 8V5.5H0.4V2.5H7Z" fill="#a8a8a8"/></svg>
<svg style="left:1058px;top:390px;" width="6.6" height="3.4" viewBox="0 0 6.6 3.4"><path d="M0 0H6.6L3.3 3.4Z" fill="#888"/></svg>
<div class="a" style="left:326px;top:403.5px;width:753px;height:1px;background:#e8f8e0;"></div>
<div class="a" style="left:326px;top:430.4px;width:753px;height:1px;background:#b8c4b4;"></div>
<svg style="left:333.8px;top:413px;" width="11" height="11" viewBox="0 0 11 11"><circle cx="5.2" cy="5.2" r="4.6" fill="#f4f4f4" stroke="#aaa" stroke-width="1"/><path d="M2.8 5.3L4.6 7.1L7.8 3.6" stroke="#aaa" stroke-width="1" fill="none"/></svg>
<div class="t" style="left:348px;top:412.5px;font-size:11.2px;color:#a0a0a0;">保存</div>
<svg style="left:381px;top:413.5px;" width="9" height="9" viewBox="0 0 9 9"><rect x="0.5" y="0.5" width="8" height="8" fill="#fafafa" stroke="#aaa"/><path d="M2.5 2.5L6.5 6.5M6.5 2.5L2.5 6.5" stroke="#aaa" stroke-width="0.9"/></svg>
<div class="t" style="left:394.7px;top:412.5px;font-size:11.2px;color:#a0a0a0;">取消</div>
<svg style="left:426.6px;top:413px;" width="10" height="11" viewBox="0 0 10 11"><path d="M1 0.5H9V9L8 10.5H0V2Z" fill="#bbb"/><circle cx="4" cy="7.5" r="2" fill="#eee"/></svg>
<div class="t" style="left:440px;top:412.5px;font-size:11.2px;color:#a0a0a0;">脚本</div>
<div class="a" style="left:471.7px;top:409px;width:1px;height:18px;background:#888;"></div>
<svg style="left:479px;top:413px;" width="12" height="10" viewBox="0 0 12 10"><path d="M0 0.7H10M0 4.3H8M0 7.9H5" stroke="#1a88d8" stroke-width="1.4"/><path d="M5.8 9.8L10.8 4.8" stroke="#1a88d8" stroke-width="1.3"/></svg>
<svg style="left:497px;top:413px;" width="12" height="10" viewBox="0 0 12 10"><path d="M0 0.7H10M0 4.3H3.5M0 7.9H3.5" stroke="#1a88d8" stroke-width="1.4"/><path d="M8 3.5V10M4.8 6.7H11.2" stroke="#1aa030" stroke-width="1.9"/></svg>
<div class="a" style="left:515.3px;top:412.2px;width:12.4px;height:10.6px;background:#fff;"></div>
<svg style="left:516px;top:413px;" width="12" height="10" viewBox="0 0 12 10"><path d="M0 0.7H11M0 8.9H11" stroke="#1a88d8" stroke-width="1.2"/><path d="M0 4.8H1.5M0 6.8H1.5" stroke="#1a88d8" stroke-width="1"/><path d="M5.5 2.8V9M2.5 5.9H8.5" stroke="#1aa030" stroke-width="1.8"/><path d="M9.5 2L11 3.5M11 2L9.5 3.5" stroke="#4aa0e0" stroke-width="0.8"/></svg>
<svg style="left:533.4px;top:413px;" width="12" height="10" viewBox="0 0 12 10"><path d="M0 0.7H11" stroke="#1a88d8" stroke-width="1.4"/><path d="M0 4.5H1.5M0 8H1.5" stroke="#1a88d8" stroke-width="1.3"/><path d="M4.5 3Q3 6 4.5 9.5M9 3Q10.5 6 9 9.5" stroke="#1a88d8" stroke-width="1.1" fill="none"/><path d="M6.8 4.3V8.3M4.8 6.3H8.8" stroke="#1aa030" stroke-width="1"/></svg>
<svg style="left:551.6px;top:413px;" width="12" height="10" viewBox="0 0 12 10"><path d="M0 0.7H11M0 4.3H4M0 7.9H4" stroke="#1a88d8" stroke-width="1.4"/><path d="M5 7.5H11.5" stroke="#e8402a" stroke-width="1.8"/></svg>
<svg style="left:570.2px;top:412px;" width="1" height="13" viewBox="0 0 1 13"><rect x="-0.2" y="0.0" width="1.4" height="1.4" fill="#b4a08c"/><rect x="-0.2" y="3.2" width="1.4" height="1.4" fill="#b4a08c"/><rect x="-0.2" y="6.4" width="1.4" height="1.4" fill="#b4a08c"/><rect x="-0.2" y="9.6" width="1.4" height="1.4" fill="#b4a08c"/><rect x="-0.2" y="12.8" width="1.4" height="1.4" fill="#b4a08c"/></svg>
<svg style="left:578.8px;top:413px;" width="9" height="10" viewBox="0 0 9 10"><path d="M4.5 8V1.5M2 4L4.5 1.3L7 4" stroke="#1a88d8" stroke-width="1.2" fill="none"/><path d="M0.5 7V9.5H8.5V7" stroke="#1a88d8" stroke-width="1" fill="none"/></svg>
<svg style="left:595.8px;top:412px;" width="1" height="13" viewBox="0 0 1 13"><rect x="-0.2" y="0.0" width="1.4" height="1.4" fill="#b4a08c"/><rect x="-0.2" y="3.2" width="1.4" height="1.4" fill="#b4a08c"/><rect x="-0.2" y="6.4" width="1.4" height="1.4" fill="#b4a08c"/><rect x="-0.2" y="9.6" width="1.4" height="1.4" fill="#b4a08c"/><rect x="-0.2" y="12.8" width="1.4" height="1.4" fill="#b4a08c"/></svg>
<svg style="left:601px;top:413px;" width="11" height="10" viewBox="0 0 11 10"><rect x="0.5" y="0.5" width="10" height="9" fill="#f4f8fc" stroke="#4a70a8" stroke-width="0.9"/><path d="M0.5 3.5H10.5M0.5 6.5H10.5M4 0.5V9.5M7 0.5V9.5" stroke="#4a70a8" stroke-width="0.7"/></svg>
<div class="t" style="left:616.2px;top:412.5px;font-size:11.2px;color:#1a1a1a;">网格</div>
<div class="t" style="left:648.5px;top:412.2px;font-size:12px;color:#4a6a9a;font-family:'Liberation Serif',serif">T</div>
<svg style="left:655.5px;top:417px;" width="5" height="5" viewBox="0 0 5 5"><path d="M4.5 0.5L1 2.5L4.5 4.5" stroke="#3a8ad8" stroke-width="0.9" fill="none"/></svg>
<div class="t" style="left:663.3px;top:412.5px;font-size:11.2px;color:#1a1a1a;">文本</div>
<svg style="left:697.8px;top:412px;" width="10" height="12" viewBox="0 0 10 12"><path d="M0.5 0.5H5.5L8 3V11.5H0.5Z" fill="#fff" stroke="#4a6aa0" stroke-width="0.9"/><circle cx="7.5" cy="9.5" r="2.2" fill="#2a88d8"/></svg>
<div class="t" style="left:711.8px;top:412.5px;font-size:11.2px;color:#1a1a1a;">记录</div>
<svg style="left:743.8px;top:412px;" width="1" height="13" viewBox="0 0 1 13"><rect x="-0.2" y="0.0" width="1.4" height="1.4" fill="#b4a08c"/><rect x="-0.2" y="3.2" width="1.4" height="1.4" fill="#b4a08c"/><rect x="-0.2" y="6.4" width="1.4" height="1.4" fill="#b4a08c"/><rect x="-0.2" y="9.6" width="1.4" height="1.4" fill="#b4a08c"/><rect x="-0.2" y="12.8" width="1.4" height="1.4" fill="#b4a08c"/></svg>
<svg style="left:752.7px;top:413px;" width="10" height="10" viewBox="0 0 10 10"><path d="M1 4V1.5H8M6.5 0L8.5 1.5L6.5 3M9 6V8.5H2M3.5 7L1.5 8.5L3.5 10" stroke="#2a7ad8" stroke-width="1.2" fill="none"/></svg>
<div class="t" style="left:766.7px;top:412.5px;font-size:11.2px;color:#1a1a1a;">面板</div>
<svg style="left:801px;top:416px;" width="7.2" height="3.6" viewBox="0 0 7.2 3.6"><path d="M0 0H7.2L3.6 3.6Z" fill="#000"/></svg>
<div class="a" style="left:327px;top:431.5px;width:523.5px;height:135.5px;background:#fff;"></div>
<div class="a" style="left:327px;top:432px;width:523.5px;height:23.5px;background:#efefef;"></div>
<div class="a" style="left:327px;top:455.5px;width:22.5px;height:111px;background:#f0f0f0;"></div>
<div class="a" style="left:350px;top:432px;width:69.3px;height:23.5px;background:#7ab8ec;"></div>
<div class="a" style="left:419.3px;top:432px;width:62.5px;height:23.5px;background:#efefef;border-right:1px solid #909090"></div>
<div class="a" style="left:349.5px;top:455px;width:132.5px;height:1px;background:#a0a0a0;"></div>
<div class="a" style="left:349.2px;top:432px;width:1.4px;height:135px;background:#454545;"></div>
<div class="t" style="left:354px;top:439.3px;font-size:6.6px;color:#1a88d0;font-weight:bold;letter-spacing:0px">ABC</div>
<div class="t" style="left:369px;top:439.6px;font-size:11.5px;color:#1a1a1a;">name</div>
<svg style="left:405px;top:437px;" width="12" height="11" viewBox="0 0 12 11"><path d="M0.5 0.5H6L4 3.5V8L2.5 7V3.5Z" fill="none" stroke="#4a9ae0" stroke-width="0.9"/><path d="M9 0.5V10.5M7.3 2.5L9 0.5L10.7 2.5M7.3 8.5L9 10.5L10.7 8.5" stroke="#2a7ad8" stroke-width="1" fill="none"/></svg>
<div class="t" style="left:424.3px;top:438px;font-size:8.6px;color:#1a88d0;letter-spacing:-0.2px">123</div>
<div class="t" style="left:439.5px;top:439.6px;font-size:11.5px;color:#1a1a1a;">age</div>
<svg style="left:466px;top:437px;" width="12" height="11" viewBox="0 0 12 11"><path d="M0.5 0.5H6.5L4.5 3.5V8L2.5 7V3.5Z" fill="#4a9ae0" stroke="#2a7ad8" stroke-width="0.9"/><path d="M9.5 0.5V10.5M7.8 2.5L9.5 0.5L11.2 2.5M7.8 8.5L9.5 10.5L11.2 8.5" stroke="#2a7ad8" stroke-width="1" fill="none"/></svg>
<div class="a" style="left:350px;top:473.55px;width:500.5px;height:1px;background:#ebebeb;"></div>
<div class="a" style="left:419.3px;top:455.8px;width:1px;height:18.25px;background:#ececec;"></div>
<div class="a" style="left:481.8px;top:455.8px;width:1px;height:18.25px;background:#ececec;"></div>
<div class="a" style="left:327px;top:473.05px;width:22.5px;height:1.4px;background:#505050;"></div>
<div class="a" style="left:350px;top:491.8px;width:500.5px;height:1px;background:#ebebeb;"></div>
<div class="a" style="left:419.3px;top:474.05px;width:1px;height:18.25px;background:#ececec;"></div>
<div class="a" style="left:481.8px;top:474.05px;width:1px;height:18.25px;background:#ececec;"></div>
<div class="a" style="left:327px;top:491.3px;width:22.5px;height:1.4px;background:#505050;"></div>
<div class="a" style="left:350px;top:510.05px;width:500.5px;height:1px;background:#ebebeb;"></div>
<div class="a" style="left:419.3px;top:492.3px;width:1px;height:18.25px;background:#ececec;"></div>
<div class="a" style="left:481.8px;top:492.3px;width:1px;height:18.25px;background:#ececec;"></div>
<div class="a" style="left:327px;top:509.55px;width:22.5px;height:1.4px;background:#505050;"></div>
<div class="a" style="left:350px;top:528.3px;width:500.5px;height:1px;background:#ebebeb;"></div>
<div class="a" style="left:419.3px;top:510.55px;width:1px;height:18.25px;background:#ececec;"></div>
<div class="a" style="left:481.8px;top:510.55px;width:1px;height:18.25px;background:#ececec;"></div>
<div class="a" style="left:327px;top:527.8px;width:22.5px;height:1.4px;background:#505050;"></div>
<div class="a" style="left:350px;top:546.55px;width:500.5px;height:1px;background:#ebebeb;"></div>
<div class="a" style="left:419.3px;top:528.8px;width:1px;height:18.25px;background:#ececec;"></div>
<div class="a" style="left:481.8px;top:528.8px;width:1px;height:18.25px;background:#ececec;"></div>
<div class="a" style="left:327px;top:546.05px;width:22.5px;height:1.4px;background:#505050;"></div>
<div class="a" style="left:350px;top:564.8px;width:500.5px;height:1px;background:#ebebeb;"></div>
<div class="a" style="left:419.3px;top:547.05px;width:1px;height:18.25px;background:#ececec;"></div>
<div class="a" style="left:481.8px;top:547.05px;width:1px;height:18.25px;background:#ececec;"></div>
<div class="a" style="left:327px;top:564.3px;width:22.5px;height:1.4px;background:#505050;"></div>
<div class="a" style="left:327px;top:455.8px;width:22.3px;height:17.25px;background:#6fb0e8;"></div>
<div class="t" style="left:330.5px;top:460.40000000000003px;font-size:11.8px;color:#000;font-weight:bold">1</div>
<div class="a" style="left:350px;top:455.8px;width:69.3px;height:18.25px;background:#6aa9e0;border:1.3px solid #2a2a2a"></div>
<div class="t" style="left:353.5px;top:460.2px;font-size:11.8px;color:#e8f0ff;">leo</div>
<div class="a" style="left:419.8px;top:455.8px;width:62px;height:17.75px;background:#bcd6f0;"></div>
<div class="t" style="left:463.5px;top:460.2px;font-size:11.8px;color:#1a1a1a;">16</div>
<div class="t" style="left:330.5px;top:478.65000000000003px;font-size:11.8px;color:#1a1a1a;">2</div>
<div class="t" style="left:353.5px;top:478.45px;font-size:11.8px;color:#1a1a1a;">norton</div>
<div class="t" style="left:463.5px;top:478.45px;font-size:11.8px;color:#1a1a1a;">17</div>
<div class="a" style="left:350px;top:492.3px;width:131.8px;height:17.75px;background:#dce6f2;"></div>
<div class="t" style="left:330.5px;top:496.90000000000003px;font-size:11.8px;color:#1a1a1a;">3</div>
<div class="t" style="left:353.5px;top:496.7px;font-size:11.8px;color:#1a1a1a;">echo</div>
<div class="t" style="left:463.5px;top:496.7px;font-size:11.8px;color:#1a1a1a;">16</div>
<div class="a" style="left:850.5px;top:431px;width:3.5px;height:136px;background:#c4ffb5;"></div>
<div class="a" style="left:853px;top:433.1px;width:95.5px;height:16.5px;background:#c4ffb5;border:1px solid #a0a0a0;border-bottom:none;border-radius:2px 2px 0 0"></div>
<div class="a" style="left:948.5px;top:449px;width:130px;height:1px;background:#a8a8a8;"></div>
<svg style="left:856.6px;top:437px;" width="9" height="9" viewBox="0 0 9 9"><path d="M1.5 0.5Q0 4.5 1.5 8.5M7.5 0.5Q9 4.5 7.5 8.5" stroke="#3a7ad8" fill="none"/><rect x="3" y="2" width="1" height="5" fill="#3a7ad8"/><rect x="5" y="2" width="1" height="5" fill="#3a7ad8"/></svg>
<div class="t" style="left:868.2px;top:436.5px;font-size:11.5px;color:#1a1a1a;">数值查看器</div>
<svg style="left:935px;top:437.5px;" width="8" height="8" viewBox="0 0 8 8"><path d="M0.5 1.7L1.7 0.5L4 2.8L6.3 0.5L7.5 1.7L5.2 4L7.5 6.3L6.3 7.5L4 5.2L1.7 7.5L0.5 6.3L2.8 4Z" fill="#fff" stroke="#7a7a7a" stroke-width="0.9"/></svg>
<svg style="left:1009.4px;top:436px;" width="10.5" height="10.3" viewBox="0 0 10.5 10.3"><path d="M0 0H8.5L10.5 2V10.3H0Z" fill="#aaa"/><rect x="2" y="0.5" width="5" height="3" fill="#ddd"/></svg>
<div class="a" style="left:1024px;top:433.1px;width:17.1px;height:15px;background:#cce4f7;border:1px solid #99ccf5;border-radius:2px"></div>
<svg style="left:1027px;top:435.5px;" width="12" height="11" viewBox="0 0 12 11"><path d="M0 0H8.5L10.5 2V10H0Z" fill="#5aaa4a"/><rect x="2" y="0.5" width="5" height="3" fill="#dff0d8"/><circle cx="9.5" cy="9" r="2.5" fill="#1a7ad8"/></svg>
<svg style="left:1048.8px;top:438px;" width="7" height="4.5" viewBox="0 0 7 4.5"><path d="M0.5 0.5H6.5L3.5 4Z" fill="none" stroke="#666" stroke-width="0.9"/></svg>
<svg style="left:1062.6px;top:437px;" width="8" height="3" viewBox="0 0 8 3"><rect x="0.5" y="0.5" width="7.5" height="2" fill="#fff" stroke="#777" stroke-width="0.9"/></svg>
<div class="a" style="left:854px;top:449.3px;width:208.6px;height:117.5px;background:#fff;"></div>
<div class="a" style="left:1062.6px;top:449.3px;width:16px;height:117.5px;background:#f0f0f0;"></div>
<div class="t" style="left:855px;top:452.8px;font-size:12px;color:#555;font-family:'Liberation Mono',monospace;">leo</div>
<svg style="left:1066.5px;top:455px;" width="7" height="5" viewBox="0 0 7 5"><path d="M0 5H7L3.5 0Z" fill="#a0a0a0"/></svg>
<svg style="left:1066.8px;top:556.6px;" width="7" height="4.5" viewBox="0 0 7 4.5"><path d="M0 0H7L3.5 4.5Z" fill="#a0a0a0"/></svg>
<div class="a" style="left:326.2px;top:379px;width:1.2px;height:208px;background:#b8b8b8;"></div>
<svg style="left:330.7px;top:571px;" width="1" height="13" viewBox="0 0 1 13"><rect x="-0.2" y="0.0" width="1.4" height="1.4" fill="#b4a08c"/><rect x="-0.2" y="3.2" width="1.4" height="1.4" fill="#b4a08c"/><rect x="-0.2" y="6.4" width="1.4" height="1.4" fill="#b4a08c"/><rect x="-0.2" y="9.6" width="1.4" height="1.4" fill="#b4a08c"/><rect x="-0.2" y="12.8" width="1.4" height="1.4" fill="#b4a08c"/></svg>
<svg style="left:337px;top:571px;" width="9" height="11" viewBox="0 0 9 11"><path d="M0.7 0V11M8.3 0.8L3 5.5L8.3 10.2" stroke="#999" stroke-width="1.2" fill="none"/></svg>
<svg style="left:356px;top:571px;" width="6" height="11" viewBox="0 0 6 11"><path d="M5.3 0.8L0.8 5.5L5.3 10.2" stroke="#999" stroke-width="1.2" fill="none"/></svg>
<svg style="left:374px;top:571px;" width="6" height="11" viewBox="0 0 6 11"><path d="M0.7 0.8L5.2 5.5L0.7 10.2" stroke="#1a8ad8" stroke-width="1.3" fill="none"/></svg>
<svg style="left:389.5px;top:571px;" width="9" height="11" viewBox="0 0 9 11"><path d="M0.7 0.8L5.6 5.5L0.7 10.2M8.3 0V11" stroke="#1a8ad8" stroke-width="1.3" fill="none"/></svg>
<div class="a" style="left:404.3px;top:569.5px;width:1px;height:15px;background:#777;"></div>
<svg style="left:411.6px;top:571px;" width="11" height="11" viewBox="0 0 11 11"><path d="M0.5 3V8.5H5M3.5 6.5L5.5 8.5L3.5 10.5" stroke="#aaa" stroke-width="0.9" fill="none"/><path d="M5.5 0.5H9L10.5 2V6.5H5.5Z" fill="#fff" stroke="#aaa" stroke-width="0.9"/></svg>
<svg style="left:429.2px;top:571px;" width="11" height="11" viewBox="0 0 11 11"><path d="M0.5 3V0.5H3M8 0.5H10.5V3M10.5 8V10.5H8M3 10.5H0.5V8" stroke="#aaa" fill="none"/><rect x="3" y="3" width="5" height="5" fill="none" stroke="#aaa"/></svg>
<div class="a" style="left:446.6px;top:567px;width:39.6px;height:19.3px;background:#fff;border-bottom:1px solid #999"></div>
<div class="t" style="left:449.2px;top:571px;font-size:12px;color:#1a1a1a;">200</div>
<svg style="left:493px;top:572px;" width="10" height="10" viewBox="0 0 10 10"><path d="M1.3 4.5Q2.5 1.2 6 1.5L8.5 3" stroke="#333" stroke-width="1.3" fill="none"/><path d="M3.5 0L6.8 1.2L4.2 3.6Z" fill="#333"/><path d="M8.7 5.5Q7.5 8.8 4 8.5L1.5 7" stroke="#333" stroke-width="1.3" fill="none"/><path d="M6.5 10L3.2 8.8L5.8 6.4Z" fill="#333"/></svg>
<div class="t" style="left:510.6px;top:571px;font-size:12px;color:#1a1a1a;">3</div>
<svg style="left:523px;top:572px;" width="1" height="11" viewBox="0 0 1 11"><rect x="-0.2" y="0.0" width="1.4" height="1.4" fill="#b4a08c"/><rect x="-0.2" y="3.2" width="1.4" height="1.4" fill="#b4a08c"/><rect x="-0.2" y="6.4" width="1.4" height="1.4" fill="#b4a08c"/><rect x="-0.2" y="9.6" width="1.4" height="1.4" fill="#b4a08c"/></svg>
<svg style="left:878px;top:570px;" width="12" height="12" viewBox="0 0 12 12"><rect x="2" y="3" width="9.5" height="6" fill="#4ab0e8"/><path d="M2.5 0V12M0.5 0.5H4.5M0.5 11.5H4.5" stroke="#2a90d8" stroke-width="1"/></svg>
<div class="t" style="left:895px;top:570.6px;font-size:12px;color:#1a1a1a;">3 行 - 94ms [11:28:33]</div>
<div class="a" style="left:0px;top:587px;width:1080px;height:21px;background:#f0f0f0;"></div>
<div class="a" style="left:0px;top:587px;width:1080px;height:1px;background:#e4e4e4;"></div>
<div class="a" style="left:271.1px;top:589px;width:1px;height:16px;background:#c8c8c8;"></div>
<div class="a" style="left:388.6px;top:589px;width:1px;height:16px;background:#c8c8c8;"></div>
<div class="a" style="left:499.7px;top:589px;width:1px;height:16px;background:#c8c8c8;"></div>
<div class="a" style="left:612px;top:589px;width:1px;height:16px;background:#c8c8c8;"></div>
<div class="t" style="left:277.5px;top:591px;font-size:11.2px;color:#1a1a1a;">可写</div>
<div class="t" style="left:394.2px;top:591px;font-size:11.6px;color:#1a1a1a;">智能插入</div>
<div class="t" style="left:506.7px;top:591px;font-size:12px;color:#1a1a1a;">1 : 1 : 0</div>
<div class="t" style="left:617.6px;top:591px;font-size:12px;color:#1a1a1a;">Sel: 0 | 0</div>
<svg style="left:685.2px;top:590px;" width="1" height="14" viewBox="0 0 1 14"><rect x="-0.2" y="0.0" width="1.4" height="1.4" fill="#c0c0c0"/><rect x="-0.2" y="3.2" width="1.4" height="1.4" fill="#c0c0c0"/><rect x="-0.2" y="6.4" width="1.4" height="1.4" fill="#c0c0c0"/><rect x="-0.2" y="9.6" width="1.4" height="1.4" fill="#c0c0c0"/><rect x="-0.2" y="12.8" width="1.4" height="1.4" fill="#c0c0c0"/></svg>
<div class="a" style="left:687.6px;top:588.3px;width:133.3px;height:17px;background:#f4f4f4;border:1px solid #d0d0d0"></div>
<div class="a" style="left:687.6px;top:588.3px;width:50.3px;height:17px;background:#a4a4a4;"></div>
<div class="t" style="left:706px;top:591px;font-size:12px;color:#1a1a1a;">193兆</div>
<div class="t" style="left:743.9px;top:591px;font-size:12px;color:#1a1a1a;">(共 512兆)</div>
<div class="a" style="left:820.9px;top:588.3px;width:1px;height:17px;background:#999;"></div>
<svg style="left:823.5px;top:590px;" width="10" height="13" viewBox="0 0 10 13"><rect x="0" y="1" width="10" height="1.5" fill="#7aa0d0"/><rect x="3.5" y="0" width="3" height="1.2" fill="#7aa0d0"/><path d="M1 3H9L8.3 12.5H1.7Z" fill="#9ab8e0"/><path d="M3.5 4.5V11M5 4.5V11M6.5 4.5V11" stroke="#5a80b8" stroke-width="0.7"/></svg>
<svg style="left:836.5px;top:590px;" width="1" height="14" viewBox="0 0 1 14"><rect x="-0.2" y="0.0" width="1.4" height="1.4" fill="#c0c0c0"/><rect x="-0.2" y="3.2" width="1.4" height="1.4" fill="#c0c0c0"/><rect x="-0.2" y="6.4" width="1.4" height="1.4" fill="#c0c0c0"/><rect x="-0.2" y="9.6" width="1.4" height="1.4" fill="#c0c0c0"/><rect x="-0.2" y="12.8" width="1.4" height="1.4" fill="#c0c0c0"/></svg><div class="a" style="left:0;top:0;width:1080px;height:608px;border:1px solid #1b7fd8;border-bottom-width:1.5px;border-radius:9px;border-top-color:transparent"></div>
</div>
</body></html>
